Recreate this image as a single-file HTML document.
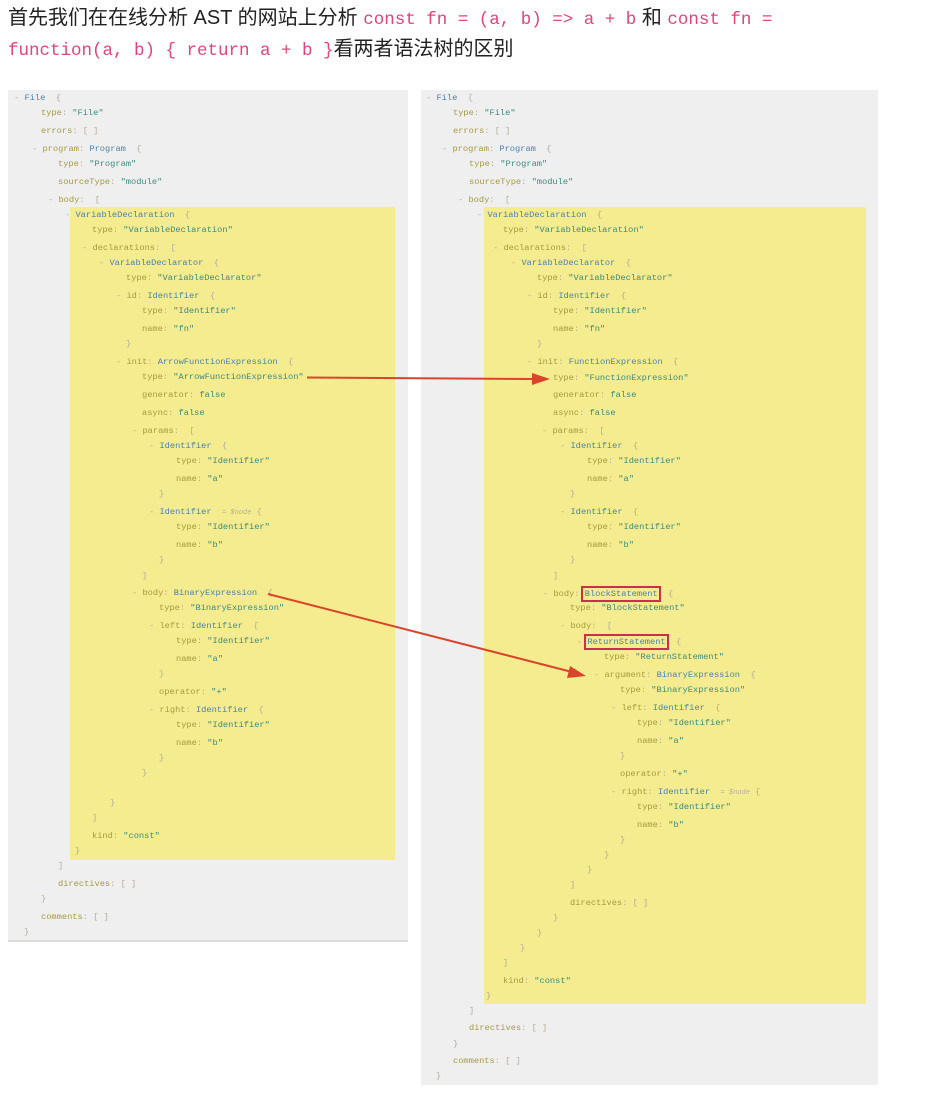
<!DOCTYPE html>
<html><head><meta charset="utf-8">
<style>
html,body{margin:0;padding:0;background:#fff;width:929px;height:1094px;overflow:hidden;position:relative}
.h{position:absolute;left:8px;font-family:"Liberation Sans","Noto Sans CJK SC",sans-serif;font-size:20px;color:#222;white-space:nowrap;line-height:22px}
.h code{font-family:"Liberation Mono",monospace;font-size:17.5px;color:#e0457b}
.pan{position:absolute;background:#efefef}
.y{position:absolute;background:#f4ec8e}
.l{position:absolute;font-family:"Liberation Mono","DejaVu Sans Mono",monospace;font-size:8.7px;line-height:12px;white-space:pre;color:#b4ad9a}
.k{color:#a69a40}.t{color:#4a83ab}.s{color:#3c8b80}.n{color:#b9b0a0;font-style:italic;font-size:7px}
.box{position:absolute;border:2px solid #c83248;box-sizing:border-box}
</style></head><body>
<div class="h" style="top:7px">首先我们在在线分析 AST 的网站上分析 <code>const fn = (a, b) =&gt; a + b</code> 和 <code>const fn =</code></div>
<div class="h" style="top:38px"><code>function(a, b) { return a + b }</code>看两者语法树的区别</div>

<div class="pan" style="left:8px;top:90px;width:400px;height:850px;border-bottom:2px solid #dcdcdc"></div>
<div class="y" style="left:70px;top:207px;width:325px;height:653px"></div>
<div class="pan" style="left:421px;top:90px;width:457px;height:995px"></div>
<div class="y" style="left:484px;top:207px;width:382px;height:797px"></div>

<!-- LEFT -->
<div class="l" style="left:14px;top:92px">- <span class="t">File</span>  {</div>
<div class="l" style="left:41px;top:107px"><span class="k">type</span>: <span class="s">"File"</span></div>
<div class="l" style="left:41px;top:125px"><span class="k">errors</span>: [ ]</div>
<div class="l" style="left:32px;top:143px">- <span class="k">program</span>: <span class="t">Program</span>  {</div>
<div class="l" style="left:58px;top:158px"><span class="k">type</span>: <span class="s">"Program"</span></div>
<div class="l" style="left:58px;top:176px"><span class="k">sourceType</span>: <span class="s">"module"</span></div>
<div class="l" style="left:48px;top:194px">- <span class="k">body</span>:  [</div>
<div class="l" style="left:65px;top:209px">- <span class="t">VariableDeclaration</span>  {</div>
<div class="l" style="left:92px;top:224px"><span class="k">type</span>: <span class="s">"VariableDeclaration"</span></div>
<div class="l" style="left:82px;top:242px">- <span class="k">declarations</span>:  [</div>
<div class="l" style="left:99px;top:257px">- <span class="t">VariableDeclarator</span>  {</div>
<div class="l" style="left:126px;top:272px"><span class="k">type</span>: <span class="s">"VariableDeclarator"</span></div>
<div class="l" style="left:116px;top:290px">- <span class="k">id</span>: <span class="t">Identifier</span>  {</div>
<div class="l" style="left:142px;top:305px"><span class="k">type</span>: <span class="s">"Identifier"</span></div>
<div class="l" style="left:142px;top:323px"><span class="k">name</span>: <span class="s">"fn"</span></div>
<div class="l" style="left:126px;top:338px">}</div>
<div class="l" style="left:116px;top:356px">- <span class="k">init</span>: <span class="t">ArrowFunctionExpression</span>  {</div>
<div class="l" style="left:142px;top:371px"><span class="k">type</span>: <span class="s">"ArrowFunctionExpression"</span></div>
<div class="l" style="left:142px;top:389px"><span class="k">generator</span>: <span class="s">false</span></div>
<div class="l" style="left:142px;top:407px"><span class="k">async</span>: <span class="s">false</span></div>
<div class="l" style="left:132px;top:425px">- <span class="k">params</span>:  [</div>
<div class="l" style="left:149px;top:440px">- <span class="t">Identifier</span>  {</div>
<div class="l" style="left:176px;top:455px"><span class="k">type</span>: <span class="s">"Identifier"</span></div>
<div class="l" style="left:176px;top:473px"><span class="k">name</span>: <span class="s">"a"</span></div>
<div class="l" style="left:159px;top:488px">}</div>
<div class="l" style="left:149px;top:506px">- <span class="t">Identifier</span>  <span class="n">= $node</span> {</div>
<div class="l" style="left:176px;top:521px"><span class="k">type</span>: <span class="s">"Identifier"</span></div>
<div class="l" style="left:176px;top:539px"><span class="k">name</span>: <span class="s">"b"</span></div>
<div class="l" style="left:159px;top:554px">}</div>
<div class="l" style="left:142px;top:570px">]</div>
<div class="l" style="left:132px;top:587px">- <span class="k">body</span>: <span class="t">BinaryExpression</span>  {</div>
<div class="l" style="left:159px;top:602px"><span class="k">type</span>: <span class="s">"BinaryExpression"</span></div>
<div class="l" style="left:149px;top:620px">- <span class="k">left</span>: <span class="t">Identifier</span>  {</div>
<div class="l" style="left:176px;top:635px"><span class="k">type</span>: <span class="s">"Identifier"</span></div>
<div class="l" style="left:176px;top:653px"><span class="k">name</span>: <span class="s">"a"</span></div>
<div class="l" style="left:159px;top:668px">}</div>
<div class="l" style="left:159px;top:686px"><span class="k">operator</span>: <span class="s">"+"</span></div>
<div class="l" style="left:149px;top:704px">- <span class="k">right</span>: <span class="t">Identifier</span>  {</div>
<div class="l" style="left:176px;top:719px"><span class="k">type</span>: <span class="s">"Identifier"</span></div>
<div class="l" style="left:176px;top:737px"><span class="k">name</span>: <span class="s">"b"</span></div>
<div class="l" style="left:159px;top:752px">}</div>
<div class="l" style="left:142px;top:767px">}</div>
<div class="l" style="left:110px;top:797px">}</div>
<div class="l" style="left:92px;top:812px">]</div>
<div class="l" style="left:92px;top:830px"><span class="k">kind</span>: <span class="s">"const"</span></div>
<div class="l" style="left:75px;top:845px">}</div>
<div class="l" style="left:58px;top:860px">]</div>
<div class="l" style="left:58px;top:878px"><span class="k">directives</span>: [ ]</div>
<div class="l" style="left:41px;top:893px">}</div>
<div class="l" style="left:41px;top:911px"><span class="k">comments</span>: [ ]</div>
<div class="l" style="left:24px;top:926px">}</div>

<!-- RIGHT -->
<div class="l" style="left:426px;top:92px">- <span class="t">File</span>  {</div>
<div class="l" style="left:453px;top:107px"><span class="k">type</span>: <span class="s">"File"</span></div>
<div class="l" style="left:453px;top:125px"><span class="k">errors</span>: [ ]</div>
<div class="l" style="left:442px;top:143px">- <span class="k">program</span>: <span class="t">Program</span>  {</div>
<div class="l" style="left:469px;top:158px"><span class="k">type</span>: <span class="s">"Program"</span></div>
<div class="l" style="left:469px;top:176px"><span class="k">sourceType</span>: <span class="s">"module"</span></div>
<div class="l" style="left:458px;top:194px">- <span class="k">body</span>:  [</div>
<div class="l" style="left:477px;top:209px">- <span class="t">VariableDeclaration</span>  {</div>
<div class="l" style="left:503px;top:224px"><span class="k">type</span>: <span class="s">"VariableDeclaration"</span></div>
<div class="l" style="left:493px;top:242px">- <span class="k">declarations</span>:  [</div>
<div class="l" style="left:511px;top:257px">- <span class="t">VariableDeclarator</span>  {</div>
<div class="l" style="left:537px;top:272px"><span class="k">type</span>: <span class="s">"VariableDeclarator"</span></div>
<div class="l" style="left:527px;top:290px">- <span class="k">id</span>: <span class="t">Identifier</span>  {</div>
<div class="l" style="left:553px;top:305px"><span class="k">type</span>: <span class="s">"Identifier"</span></div>
<div class="l" style="left:553px;top:323px"><span class="k">name</span>: <span class="s">"fn"</span></div>
<div class="l" style="left:537px;top:338px">}</div>
<div class="l" style="left:527px;top:356px">- <span class="k">init</span>: <span class="t">FunctionExpression</span>  {</div>
<div class="l" style="left:553px;top:372px"><span class="k">type</span>: <span class="s">"FunctionExpression"</span></div>
<div class="l" style="left:553px;top:389px"><span class="k">generator</span>: <span class="s">false</span></div>
<div class="l" style="left:553px;top:407px"><span class="k">async</span>: <span class="s">false</span></div>
<div class="l" style="left:542px;top:425px">- <span class="k">params</span>:  [</div>
<div class="l" style="left:560px;top:440px">- <span class="t">Identifier</span>  {</div>
<div class="l" style="left:587px;top:455px"><span class="k">type</span>: <span class="s">"Identifier"</span></div>
<div class="l" style="left:587px;top:473px"><span class="k">name</span>: <span class="s">"a"</span></div>
<div class="l" style="left:570px;top:488px">}</div>
<div class="l" style="left:560px;top:506px">- <span class="t">Identifier</span>  {</div>
<div class="l" style="left:587px;top:521px"><span class="k">type</span>: <span class="s">"Identifier"</span></div>
<div class="l" style="left:587px;top:539px"><span class="k">name</span>: <span class="s">"b"</span></div>
<div class="l" style="left:570px;top:554px">}</div>
<div class="l" style="left:553px;top:570px">]</div>
<div class="l" style="left:543px;top:588px">- <span class="k">body</span>: <span class="t">BlockStatement</span>  {</div>
<div class="l" style="left:570px;top:602px"><span class="k">type</span>: <span class="s">"BlockStatement"</span></div>
<div class="l" style="left:560px;top:620px">- <span class="k">body</span>:  [</div>
<div class="l" style="left:577px;top:636px">- <span class="t">ReturnStatement</span>  {</div>
<div class="l" style="left:604px;top:651px"><span class="k">type</span>: <span class="s">"ReturnStatement"</span></div>
<div class="l" style="left:594px;top:669px">- <span class="k">argument</span>: <span class="t">BinaryExpression</span>  {</div>
<div class="l" style="left:620px;top:684px"><span class="k">type</span>: <span class="s">"BinaryExpression"</span></div>
<div class="l" style="left:611px;top:702px">- <span class="k">left</span>: <span class="t">Identifier</span>  {</div>
<div class="l" style="left:637px;top:717px"><span class="k">type</span>: <span class="s">"Identifier"</span></div>
<div class="l" style="left:637px;top:735px"><span class="k">name</span>: <span class="s">"a"</span></div>
<div class="l" style="left:620px;top:750px">}</div>
<div class="l" style="left:620px;top:768px"><span class="k">operator</span>: <span class="s">"+"</span></div>
<div class="l" style="left:611px;top:786px">- <span class="k">right</span>: <span class="t">Identifier</span>  <span class="n">= $node</span> {</div>
<div class="l" style="left:637px;top:801px"><span class="k">type</span>: <span class="s">"Identifier"</span></div>
<div class="l" style="left:637px;top:819px"><span class="k">name</span>: <span class="s">"b"</span></div>
<div class="l" style="left:620px;top:834px">}</div>
<div class="l" style="left:604px;top:849px">}</div>
<div class="l" style="left:587px;top:864px">}</div>
<div class="l" style="left:570px;top:879px">]</div>
<div class="l" style="left:570px;top:897px"><span class="k">directives</span>: [ ]</div>
<div class="l" style="left:553px;top:912px">}</div>
<div class="l" style="left:537px;top:927px">}</div>
<div class="l" style="left:520px;top:942px">}</div>
<div class="l" style="left:503px;top:957px">]</div>
<div class="l" style="left:503px;top:975px"><span class="k">kind</span>: <span class="s">"const"</span></div>
<div class="l" style="left:486px;top:990px">}</div>
<div class="l" style="left:469px;top:1005px">]</div>
<div class="l" style="left:469px;top:1022px"><span class="k">directives</span>: [ ]</div>
<div class="l" style="left:453px;top:1038px">}</div>
<div class="l" style="left:453px;top:1055px"><span class="k">comments</span>: [ ]</div>
<div class="l" style="left:436px;top:1070px">}</div>

<div class="box" style="left:581px;top:586px;width:80px;height:16px"></div>
<div class="box" style="left:584px;top:634px;width:85px;height:16px"></div>

<svg style="position:absolute;left:0;top:0" width="929" height="1094">
<g stroke="#d9442b" stroke-width="2" fill="#d9442b">
<line x1="307" y1="377.5" x2="535" y2="379"/>
<polygon points="550,379 532,373 532,385" stroke="none"/>
<line x1="268" y1="594" x2="572" y2="672"/>
<polygon points="586,676 570,666 567,678" stroke="none"/>
</g>
</svg>
</body></html>
